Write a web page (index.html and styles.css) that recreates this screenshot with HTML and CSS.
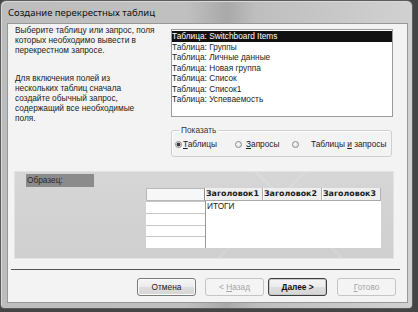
FILE: index.html
```html
<!DOCTYPE html>
<html lang="ru">
<head>
    <meta charset="UTF-8">
    <title>Создание перекрестных таблиц</title>
    <link rel="stylesheet" href="styles.css">
</head>
<body>
    <div class="window">
        <div class="title">Создание перекрестных таблиц</div>
        <div class="client">
            <div class="top">
                <div class="hint">
                    <p>Выберите таблицу или запрос, поля<br>которых необходимо вывести в<br>перекрестном запросе.</p>
                    <p>Для включения полей из<br>нескольких таблиц сначала<br>создайте обычный запрос,<br>содержащий все необходимые<br>поля.</p>
                </div>
                <div class="pick">
                    <ul class="listbox">
                        <li class="sel">Таблица: Switchboard Items</li>
                        <li>Таблица: Группы</li>
                        <li>Таблица: Личные данные</li>
                        <li>Таблица: Новая группа</li>
                        <li>Таблица: Список</li>
                        <li>Таблица: Список1</li>
                        <li>Таблица: Успеваемость</li>
                    </ul>
                    <fieldset class="show">
                        <legend>Показать</legend>
                        <div class="radios">
                            <label class="radio r1"><span class="dot on"></span><span><u>Т</u>аблицы</span></label>
                            <label class="radio r2"><span class="dot"></span><span><u>З</u>апросы</span></label>
                            <label class="radio r3"><span class="dot"></span><span>Таблицы <u>и</u> запросы</span></label>
                        </div>
                    </fieldset>
                </div>
            </div>

            <div class="sample">
                <div class="sample-title">Образец:</div>
                <div class="grid">
                    <div class="corner"></div>
                    <div class="heads">
                        <div class="head">Заголовок1</div>
                        <div class="head">Заголовок2</div>
                        <div class="head">Заголовок3</div>
                    </div>
                    <div class="rows">
                        <div class="row"></div>
                        <div class="row"></div>
                        <div class="row"></div>
                        <div class="row"></div>
                    </div>
                    <div class="cells">ИТОГИ</div>
                </div>
            </div>

            <div class="sep"></div>

            <div class="buttons">
                <button class="btn cancel">Отмена</button>
                <button class="btn off back">&lt; <u>Н</u>азад</button>
                <button class="btn def next"><u>Д</u>алее &gt;</button>
                <button class="btn off"><u>Г</u>отово</button>
            </div>
        </div>
    </div>
</body>
</html>
```

FILE: styles.css
```css
body {
    margin: 0;
    width: 418px;
    height: 312px;
    overflow: hidden;
    background: #454545;
    font-family: "Liberation Sans", Arial, sans-serif;
    font-size: 8.3px;
    color: #1c1c1c;
}

.window {
    width: 413px;
    height: 309px;
    box-sizing: border-box;
    display: flex;
    flex-direction: column;
    border: 1px solid #5c5c5c;
    border-radius: 6px 6px 4px 4px;
    padding: 0 4px 5px 6px;
    background: linear-gradient(to right, #bdbdbd, #c0c0c0 45%, #a9a9a9 55%, #bebebe 62%, #cbcbcb 88%, #d1d1d1);
    box-shadow: inset 1px 1px 0 #d8d8d8;
}

.title {
    height: 22px;
    line-height: 23px;
    padding-left: 1px;
    font-family: "Noto Sans", sans-serif;
    font-size: 9.5px;
    color: #111;
}

.client {
    flex: 1;
    display: flex;
    flex-direction: column;
    background: #f3f3f3;
    border: 1px solid #989898;
    padding: 0 13px 0 6px;
}

.top {
    height: 147px;
    display: flex;
}

.hint {
    width: 156px;
    padding: 1px 0 0 1px;
    line-height: 10px;
    color: #222;
}
.hint p {
    margin: 0 0 18px;
}

.pick {
    width: 222px;
    padding-top: 5px;
}

.listbox {
    list-style: none;
    margin: 0;
    padding: 1px 0;
    height: 88px;
    box-sizing: border-box;
    border: 1px solid #9a9a9a;
    background: #fff;
}
.listbox li {
    line-height: 10.5px;
    padding-left: 0;
    white-space: nowrap;
}
.listbox li.sel {
    background: #111;
    color: #fff;
}

.show {
    width: 221px;
    box-sizing: border-box;
    margin: 8px 0 0;
    padding: 4px 3px 7px;
    border: 1px solid #cfcfcf;
    border-radius: 3px;
    box-shadow: inset 1px 1px 0 #fff;
    min-inline-size: 0;
}
.show legend {
    margin-left: 4px;
    padding: 0 2px;
    line-height: 10px;
    color: #333;
}

.radios {
    display: flex;
    align-items: center;
    height: 10px;
}
.radio {
    display: flex;
    align-items: center;
}
.r1 { width: 60px; }
.r2 { width: 57px; }
.r1 .dot { margin-right: 1px; }
.r2 .dot { margin-right: 4px; }
.r3 .dot { margin-right: 12px; }

.dot {
    width: 5px;
    height: 5px;
    border: 1px solid #8c8c8c;
    border-radius: 50%;
    background: radial-gradient(circle at 40% 40%, #fdfdfd, #d6d6d6);
}
.dot.on {
    background: radial-gradient(circle, #3a3a3a 0 1.6px, #e6e6e6 2.2px);
}

.sample {
    height: 88px;
    box-sizing: border-box;
    border: 1px solid #e3e3e3;
    padding: 2px 0 0 11px;
    background:
        linear-gradient(135deg, transparent 62%, rgba(255,255,255,.18) 62.4%, transparent 63%),
        linear-gradient(45deg, transparent 70%, rgba(255,255,255,.18) 70.4%, transparent 71%),
        linear-gradient(to bottom, #d6d6d6, #cfcfcf);
}
.sample-title {
    width: 67px;
    height: 13px;
    line-height: 13px;
    padding-left: 1px;
    background: #8b8b8b;
    color: #2a2a2a;
}

.grid {
    display: grid;
    grid-template-columns: 59px 176px;
    grid-template-rows: 13px 47px;
    margin: 1px 0 0 120px;
}
.corner {
    background: #f7f7f7;
    border: 1px solid #b9b9b9;
    border-right-color: #8e8e8e;
}
.heads {
    display: flex;
    background: #eeeeee;
    border-bottom: 1px solid #a8a8a8;
}
.head {
    width: 58px;
    box-sizing: border-box;
    padding-left: 1px;
    line-height: 12px;
    font-family: "DejaVu Sans", sans-serif;
    font-weight: bold;
    font-size: 7.9px;
    color: #1a1a1a;
    white-space: nowrap;
    border-right: 1px solid #b0b0b0;
    box-shadow: inset 1px 0 0 #fff;
}
.head + .head {
    width: 59px;
}
.rows {
    display: flex;
    flex-direction: column;
    gap: 1px;
    padding-top: 1px;
    background: #c6c6c6;
}
.row {
    flex: 1;
    background: #fff;
}
.cells {
    background: #fff;
    border-left: 1px solid #9a9a9a;
    padding-left: 1px;
    line-height: 11px;
    color: #222;
}

.sep {
    height: 1px;
    margin: 10px -6px 0 -3px;
    background: #555;
}

.buttons {
    display: flex;
    justify-content: flex-end;
    margin: 8px -2px 0 0;
}
.btn {
    width: 59px;
    height: 18px;
    padding: 0;
    box-sizing: border-box;
    border: 1px solid #7a7a7a;
    border-radius: 3px;
    background: linear-gradient(#f5f5f5, #ececec 48%, #dedede 52%, #d5d5d5);
    font-family: "Liberation Sans", Arial, sans-serif;
    font-size: 8.3px;
    color: #222;
    box-shadow: inset 0 0 0 1px #fbfbfb;
}
.btn.cancel { margin-right: 9px; }
.btn.back { margin-right: 4px; }
.btn.next { margin-right: 10px; }
.btn.off {
    color: #a6a6a6;
    border-color: #c4c4c4;
    background: #f4f4f4;
    box-shadow: none;
}
.btn.def {
    border-color: #3d3d3d;
    font-weight: bold;
    color: #111;
    box-shadow: inset 0 0 0 1px #c9c9c9;
}
```
